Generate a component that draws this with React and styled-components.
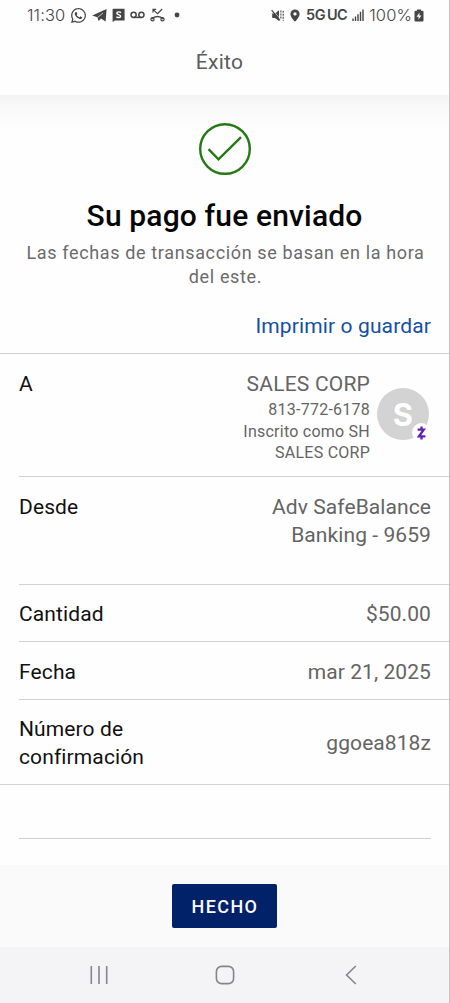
import React from "react"
import styled, { createGlobalStyle } from "styled-components"
import { FaWhatsapp } from "react-icons/fa"

//Styles
const GlobalStyle = createGlobalStyle`
    * {
        box-sizing: border-box;
    }
    body {
        margin: 0;
        background-color: #fefefe;
        font-family: Roboto, "Liberation Sans", sans-serif;
    }
`
const Screen = styled.div`
    display: flex;
    flex-direction: column;
    width: 450px;
    height: 1003px;
    background-color: #fefefe;
    border-right: 1px solid #c4c4c4;
    overflow: hidden;
`
const StatusBar = styled.div`
    display: flex;
    justify-content: space-between;
    align-items: center;
    height: 30px;
    padding: 0 25px 0 27px;
    color: #454545;
    font-family: Inter, Roboto, sans-serif;
    svg {
        display: block;
        flex: none;
    }
`
const StatusGroup = styled.div`
    display: flex;
    align-items: center;
    gap: ${props => props.$gap}px;
`
const StatusText = styled.span`
    font-size: ${props => props.$size || 16}px;
    font-weight: ${props => props.$weight || 300};
    letter-spacing: ${props => props.$spacing || 0}px;
    line-height: 20px;
    white-space: nowrap;
`
const Header = styled.header`
    display: flex;
    justify-content: center;
    align-items: center;
    height: 65px;
    padding: 0 10px 2px 0;
    color: #5c5c5c;
    font-size: 21px;
    letter-spacing: 0.3px;
`
const Summary = styled.section`
    display: flex;
    flex-direction: column;
    align-items: center;
    height: 258px;
    padding-top: 28px;
    background: linear-gradient(#f3f3f3, #f9f9f9 10px, #fefefe 36px);
    svg {
        display: block;
    }
`
const Title = styled.h1`
    margin: 23px 0 0;
    color: #060606;
    font-size: 30px;
    font-weight: 500;
    line-height: 36px;
    letter-spacing: 0.15px;
    white-space: nowrap;
`
const Subtitle = styled.p`
    width: 420px;
    margin: 7px 0 0 2px;
    color: #6b6b6b;
    font-size: 18px;
    line-height: 24px;
    letter-spacing: 0.64px;
    text-align: center;
`
const PrintLink = styled.a`
    align-self: flex-end;
    margin: 23px 18px 0 0;
    color: #1450a0;
    font-size: 21px;
    line-height: 28px;
    letter-spacing: 0.13px;
`
const Details = styled.dl`
    margin: 0;
    padding-left: 19px;
    border-top: 1px solid #cfcfcf;
    border-bottom: 1px solid #d4d4d4;
`
const Row = styled.div`
    display: flex;
    justify-content: space-between;
    align-items: ${props => props.$align || "flex-start"};
    height: ${props => props.$height}px;
    padding: ${props => props.$top || 17}px 18px 0 0;
    & + & {
        border-top: 1px solid #d2d2d2;
    }
`
const Label = styled.dt`
    width: 150px;
    color: #111;
    font-size: 21px;
    line-height: 27.5px;
    letter-spacing: 0.12px;
`
const Value = styled.dd`
    margin: 0;
    color: #646464;
    font-size: 21px;
    line-height: 27.5px;
    letter-spacing: 0.08px;
    text-align: right;
`
const Payee = styled.dd`
    display: flex;
    align-items: flex-start;
    gap: 7px;
    margin: -1px 2px 0 0;
`
const PayeeText = styled.div`
    display: flex;
    flex-direction: column;
    align-items: flex-end;
    color: #646464;
`
const PayeeName = styled.span`
    font-size: 21px;
    line-height: 28px;
    letter-spacing: 0.2px;
`
const PayeeLine = styled.span`
    font-size: 16px;
    line-height: ${props => props.$line}px;
    letter-spacing: 0.24px;
`
const Avatar = styled.div`
    position: relative;
    display: flex;
    justify-content: center;
    align-items: center;
    width: 52px;
    height: 52px;
    margin-top: 18px;
    border-radius: 50%;
    background-color: #d3d3d3;
    color: #fefefe;
    font-family: Inter, sans-serif;
    font-size: 31px;
    font-weight: 700;
`
const ZelleBadge = styled.span`
    position: absolute;
    right: -2px;
    bottom: -2px;
    display: flex;
    justify-content: center;
    align-items: center;
    width: 19px;
    height: 19px;
    border-radius: 50%;
    background-color: #fefefe;
`
const EmptyRow = styled.div`
    height: 54px;
    margin: 0 18px 0 19px;
    border-bottom: 1px solid #cecece;
`
const Footer = styled.footer`
    display: flex;
    justify-content: center;
    align-items: flex-start;
    height: 82px;
    margin-top: auto;
    padding-top: 19px;
    background-color: #fafafa;
`
const DoneButton = styled.button`
    width: 105px;
    height: 44px;
    padding: 1px 0 0 1px;
    border: none;
    border-radius: 2px;
    background-color: #012169;
    color: #fafafa;
    font-family: inherit;
    font-size: 18px;
    font-weight: 500;
    letter-spacing: 1.4px;
`
const NavBar = styled.nav`
    display: flex;
    align-items: center;
    gap: 102px;
    height: 56px;
    padding-left: 87px;
    background-color: #f4f4f7;
`

const TelegramIcon = () => (
    <svg width="15" height="14" viewBox="0 0 15 14">
        <path d="M0.2 7.6 14.6 1 13.6 13.4 9 10.6 6.6 13 5.4 9.2Z" fill="currentColor" />
        <path d="M5.6 9.4 11 5" stroke="#fefefe" strokeWidth="0.7" />
    </svg>
)

const VoicemailIcon = () => (
    <svg width="15" height="8" viewBox="0 0 15 8" fill="none" stroke="currentColor" strokeWidth="1.5">
        <circle cx="3.6" cy="3.8" r="2.6" />
        <circle cx="11.4" cy="3.8" r="2.6" />
        <path d="M3.6 6.4H11.4" />
    </svg>
)

const MissedCallIcon = () => (
    <svg width="15" height="14" viewBox="0 0 15 14" fill="none" stroke="currentColor" strokeWidth="1.2">
        <path d="M3 4.6V1.4H6.2M3.2 1.6 7.5 5.6 12.2 1" />
        <path d="M1.6 11C5 7.6 10 7.6 13.4 11" strokeWidth="1.4" />
        <circle cx="2.5" cy="11.3" r="1.6" />
        <circle cx="12.5" cy="11.3" r="1.6" />
    </svg>
)

const MuteIcon = () => (
    <svg width="13" height="13" viewBox="0 0 13 13">
        <path d="M1.2 4.6H4L8 1.2V12L4 9H1.2Z" fill="currentColor" />
        <path d="M1.6 0.8 9.6 10.4" stroke="#fefefe" strokeWidth="0.7" />
        <path d="M0.6 1.2 9 11.4" stroke="currentColor" strokeWidth="1.2" />
        <path d="M9.9 1.5V9.5M12.2 1.8V11.8" stroke="currentColor" strokeWidth="1.1" strokeDasharray="2 1" />
    </svg>
)

const PinIcon = () => (
    <svg width="10" height="13" viewBox="0 0 10 13">
        <path d="M5 0.4A4.6 4.6 0 0 0 0.4 4.9C0.4 8.2 5 12.6 5 12.6S9.6 8.2 9.6 4.9A4.6 4.6 0 0 0 5 0.4ZM5 3.2A1.7 1.7 0 1 1 5 6.6 1.7 1.7 0 0 1 5 3.2Z" fill="currentColor" />
    </svg>
)

const SignalIcon = () => (
    <svg width="12" height="12" viewBox="0 0 12 12" stroke="currentColor" strokeWidth="1.4">
        <path d="M1 9.4V12M3.5 7.4V12M6 5.2V12M8.5 2.8V12M11 0.4V12" />
    </svg>
)

const BatteryIcon = () => (
    <svg width="10" height="13" viewBox="0 0 10 13">
        <path d="M3 0.5H7V1.7H8.4Q9.5 1.7 9.5 2.8V11.4Q9.5 12.5 8.4 12.5H1.6Q0.5 12.5 0.5 11.4V2.8Q0.5 1.7 1.6 1.7H3Z" fill="currentColor" />
        <path d="M5.6 3.6 2.5 7.7H4.7L4.3 10.8 7.5 6.6H5.3Z" fill="#fefefe" />
    </svg>
)

const SquareSIcon = () => (
    <svg width="13" height="14" viewBox="0 0 13 14">
        <path d="M1 0.8H12.6V12.6H3L0.6 14V1.2Z" fill="currentColor" />
        <path d="M8.9 4.7C8 3.6 4.8 3.5 4.8 5.2C4.8 6.9 8.6 6.3 8.6 8.2C8.6 9.9 5.4 9.9 4.4 8.7" fill="none" stroke="#fefefe" strokeWidth="1.4" />
    </svg>
)

const details = [
    { label: "Desde", value: <>Adv SafeBalance<br />Banking - 9659</>, height: 108 },
    { label: "Cantidad", value: "$50.00", height: 57, top: 16 },
    { label: "Fecha", value: "mar 21, 2025", height: 58 },
    { label: "Número de confirmación", value: "ggoea818z", height: 85, align: "center", top: 3 },
]

const App = () => {
    return (
        <Screen>
            <GlobalStyle />
            <StatusBar>
                <StatusGroup $gap={5}>
                    <StatusText $size={16.5} $spacing={0.1}>11:30</StatusText>
                    <FaWhatsapp size={17} />
                    <TelegramIcon />
                    <SquareSIcon />
                    <VoicemailIcon />
                    <MissedCallIcon />
                    <svg width="18" height="6" viewBox="0 0 18 6">
                        <circle cx="7" cy="3" r="2.4" fill="currentColor" />
                    </svg>
                </StatusGroup>
                <StatusGroup $gap={5}>
                    <StatusGroup $gap={6}>
                        <MuteIcon />
                        <PinIcon />
                        <StatusText $weight={600} $size={14.5} $spacing={-0.5}>5G&#8201;UC</StatusText>
                    </StatusGroup>
                    <SignalIcon />
                    <StatusGroup $gap={2}>
                        <StatusText $size={16.5} $spacing={0.1}>100%</StatusText>
                        <BatteryIcon />
                    </StatusGroup>
                </StatusGroup>
            </StatusBar>
            <Header>Éxito</Header>

            <Summary>
                <svg width="52" height="52" viewBox="0 0 52 52" fill="none" stroke="#237a14" strokeWidth="2.4">
                    <circle cx="26" cy="26" r="24.8" />
                    <path d="M9.5 26.2 19.5 36.4 42 14.2" />
                </svg>
                <Title>Su pago fue enviado</Title>
                <Subtitle>Las fechas de transacción se basan en la hora del este.</Subtitle>
                <PrintLink>Imprimir o guardar</PrintLink>
            </Summary>

            <Details>
                <Row $height={122}>
                    <Label>A</Label>
                    <Payee>
                        <PayeeText>
                            <PayeeName>SALES CORP</PayeeName>
                            <PayeeLine $line={23}>813-772-6178</PayeeLine>
                            <PayeeLine $line={21}>Inscrito como SH</PayeeLine>
                            <PayeeLine $line={21}>SALES CORP</PayeeLine>
                        </PayeeText>
                        <Avatar>
                            S
                            <ZelleBadge>
                                <svg width="9" height="14" viewBox="0 0 9 14" fill="none" stroke="#6420b4" strokeWidth="2.3">
                                    <path d="M0.6 3.6H6.8L2 10.3H8.4M4.5 0.4V3.4M4.5 10.4V13.6" />
                                </svg>
                            </ZelleBadge>
                        </Avatar>
                    </Payee>
                </Row>
                {details.map(item => (
                    <Row key={item.label} $height={item.height} $align={item.align} $top={item.top}>
                        <Label>{item.label}</Label>
                        <Value>{item.value}</Value>
                    </Row>
                ))}
            </Details>
            <EmptyRow />

            <Footer>
                <DoneButton>HECHO</DoneButton>
            </Footer>
            <NavBar>
                <svg width="24" height="20" viewBox="0 0 24 20" stroke="#858589" strokeWidth="1.6">
                    <path d="M4.3 1V19M12 1V19M19.7 1V19" />
                </svg>
                <svg width="24" height="20" viewBox="0 0 24 20" fill="none" stroke="#858589" strokeWidth="1.6">
                    <rect x="3.4" y="1.4" width="17.2" height="17.2" rx="5.2" />
                </svg>
                <svg width="24" height="20" viewBox="0 0 24 20" fill="none" stroke="#858589" strokeWidth="1.6">
                    <path d="M16.8 1 7.6 10 16.8 19" />
                </svg>
            </NavBar>
        </Screen>
    )
}

export default App
